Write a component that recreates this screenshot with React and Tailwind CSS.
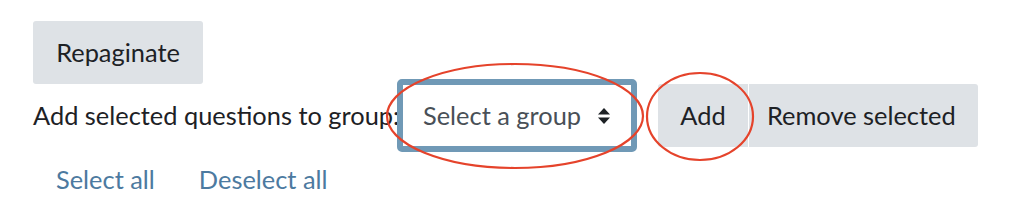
export default function App() {
    return (
        <div className="relative w-[1022px] h-[206px] bg-white text-[#1d2125] font-['Lato',sans-serif] text-[25.4px] overflow-hidden">
            <div className="pl-[33px] pt-[21px] flex flex-col">
                <div>
                    <button className="h-[63px] w-[170px] rounded-[3px] bg-[#dee2e6] text-[#1d2125] whitespace-nowrap">Repaginate</button>
                </div>
                <div className="mt-[-5px] flex items-center">
                    <label className="w-[362px] shrink-0 whitespace-nowrap">Add selected questions to group:</label>
                    <div className="ml-[2px] shrink-0 h-[73px] w-[240px] rounded-[5px] border-[6px] border-[#7099b6] bg-white flex items-center pl-[20px] pr-[20px] justify-between">
                        <span className="text-[#495057] whitespace-nowrap">Select a group</span>
                        <svg width="14" height="18" viewBox="0 0 14 18" className="shrink-0">
                            <path d="M7 1 L13 7.5 H1 Z" fill="#1d2125" />
                            <path d="M7 17 L13 10.5 H1 Z" fill="#1d2125" />
                        </svg>
                    </div>
                    <div className="ml-[21px] flex shrink-0">
                        <button className="h-[63px] w-[90px] rounded-l-[3px] bg-[#dee2e6] whitespace-nowrap">Add</button>
                        <button className="h-[63px] w-[229px] ml-[1px] rounded-r-[3px] bg-[#dee2e6] pl-[18px] text-left whitespace-nowrap">Remove selected</button>
                    </div>
                </div>
                <div className="mt-[8px] flex gap-[44px] pl-[23px] text-[#4c7aa0]">
                    <a>Select all</a>
                    <a>Deselect all</a>
                </div>
            </div>
            <svg className="absolute inset-0 pointer-events-none" width="1022" height="206">
                <ellipse cx="515" cy="116" rx="128" ry="52" fill="none" stroke="#e5432b" strokeWidth="2.2" />
                <ellipse cx="700" cy="116.5" rx="53" ry="43.5" fill="none" stroke="#e5432b" strokeWidth="2.2" />
            </svg>
        </div>
    );
}
